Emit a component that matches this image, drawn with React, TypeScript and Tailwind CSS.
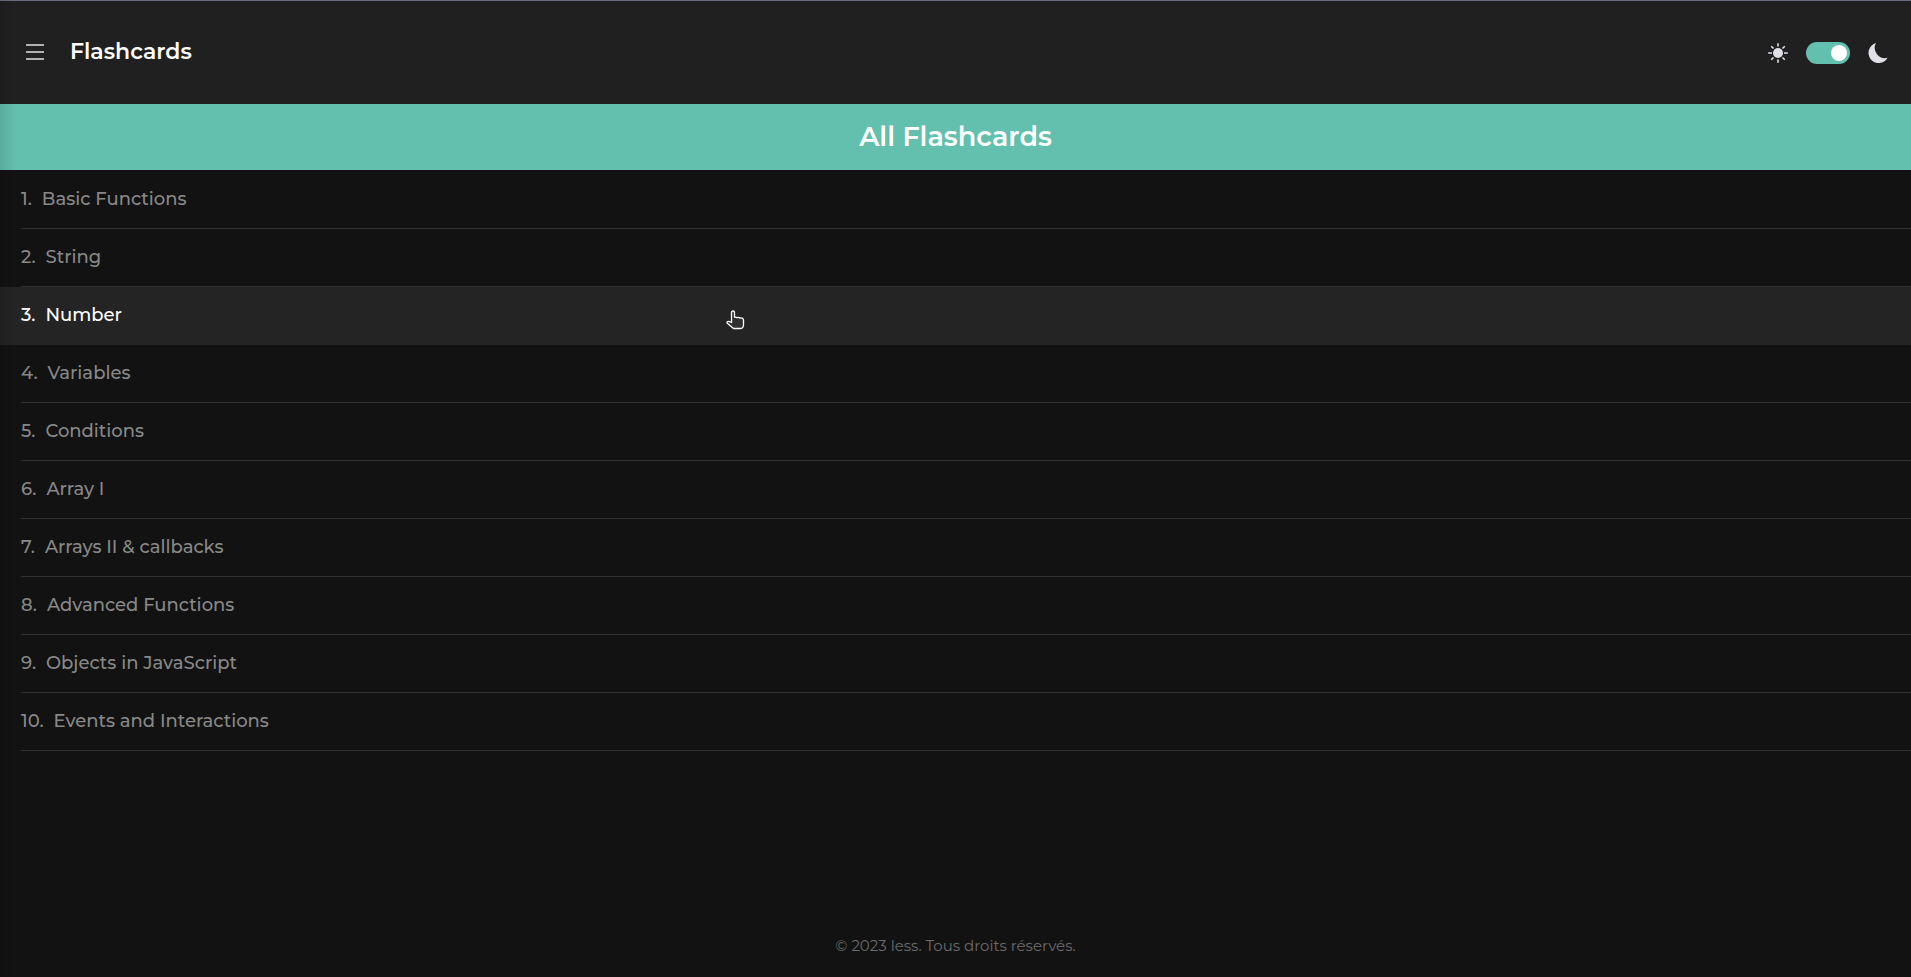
import { useState } from "react";

const decks = [
  "Basic Functions",
  "String",
  "Number",
  "Variables",
  "Conditions",
  "Array I",
  "Arrays II & callbacks",
  "Advanced Functions",
  "Objects in JavaScript",
  "Events and Interactions",
];

function MenuIcon() {
  return (
    <svg width="18" height="16" viewBox="0 0 18 16" stroke="#e0e0e6" strokeWidth="1.5" aria-hidden="true">
      <path d="M0 1h18M0 8h18M0 15h18" />
    </svg>
  );
}

function SunIcon() {
  return (
    <svg width="20" height="20" viewBox="0 0 20 20" aria-hidden="true">
      <circle cx="10" cy="10" r="5" fill="#e0e0e6" />
      <path
        d="M10 0.2v3.4M10 16.4v3.4M0.2 10h3.8M16 10h3.8M3.2 3.2l2.3 2.3M14.5 14.5l2.3 2.3M3.2 16.8l2.3-2.3M14.5 5.5l2.3-2.3"
        stroke="#e0e0e6"
        strokeWidth="1.6"
      />
    </svg>
  );
}

function MoonIcon() {
  return (
    <svg width="20" height="20" viewBox="0 0 20 20" aria-hidden="true">
      <path d="M8 0A10.3 10.3 0 0 0 19.6 14.8A10.2 10.2 0 1 1 8 0Z" fill="#e0e0e6" />
    </svg>
  );
}

function HandPointer() {
  return (
    <svg
      className="pointer-events-none absolute top-[23px] left-[726px]"
      width="19"
      height="20"
      viewBox="0 0 19 20"
      aria-hidden="true"
    >
      <path
        d="M5.5 12.5V2.5Q5.5 1 7 1T8.5 2.5V7.2Q10 6.7 11 7.7Q12.7 6.9 13.8 8Q17.5 7.5 17.5 10.5V15Q17.5 18.5 14 18.5H7.5L1 13Q0.8 11.2 2.8 11.4L5.5 12.5Z"
        fill="#303030"
        stroke="#ffffff"
        strokeWidth="1.3"
        strokeLinejoin="round"
      />
    </svg>
  );
}

export default function App() {
  const [dark, setDark] = useState(true);
  const current = 2;

  return (
    <div className="relative flex min-h-screen flex-col bg-[#121212] font-['Montserrat','Inter',sans-serif]">
      <header className="flex h-[104px] items-center justify-between border-t border-[#696c7c] bg-[#202020] pr-[23px] pl-[26px]">
        <div className="flex items-center gap-[26px] pb-0.5">
          <button type="button" aria-label="Menu" className="cursor-pointer">
            <MenuIcon />
          </button>
          <h1 className="text-[22px] leading-7 font-semibold text-white">Flashcards</h1>
        </div>
        <div className="flex items-center gap-[18px]">
          <SunIcon />
          <label className="relative flex h-[22px] w-11 cursor-pointer">
            <input
              type="checkbox"
              role="switch"
              aria-label="Dark mode"
              checked={dark}
              onChange={(e) => setDark(e.target.checked)}
              className="peer h-[22px] w-11 cursor-pointer appearance-none rounded-full bg-[#555555] checked:bg-[#63bfae]"
            />
            <span className="pointer-events-none absolute top-[3px] left-[3px] size-4 rounded-full bg-white peer-checked:left-[25px]" />
          </label>
          <MoonIcon />
        </div>
      </header>

      <h2 className="bg-[#63bfae] py-[17px] text-center text-[27px] leading-8 font-semibold text-white">
        All Flashcards
      </h2>

      <main className="grow">
        <ol className="pt-px">
          {decks.map((title, i) => (
            <li key={title}>
              <a
                href={`#deck-${i + 1}`}
                className={
                  i === current
                    ? "relative block bg-[#242424] pl-[21px] text-white"
                    : "block pl-[21px] text-[#888888] hover:bg-[#242424] hover:text-white"
                }
              >
                <span
                  className={
                    i === current
                      ? "flex h-[58px] items-center gap-[10px] border-b border-transparent pb-0.5 text-lg leading-6 font-medium"
                      : "flex h-[58px] items-center gap-[10px] border-b border-[#303030] pb-0.5 text-lg leading-6 font-medium"
                  }
                >
                  <span>{i + 1}.</span>
                  <span>{title}</span>
                </span>
                {i === current && <HandPointer />}
              </a>
            </li>
          ))}
        </ol>
      </main>

      <footer className="pb-[19px] text-center text-[15px] leading-6 text-[#6b6b6b]">
        © 2023 less. Tous droits réservés.
      </footer>

      <div className="pointer-events-none absolute inset-y-0 left-0 w-4 bg-linear-to-r from-black/10 to-transparent" />
    </div>
  );
}
